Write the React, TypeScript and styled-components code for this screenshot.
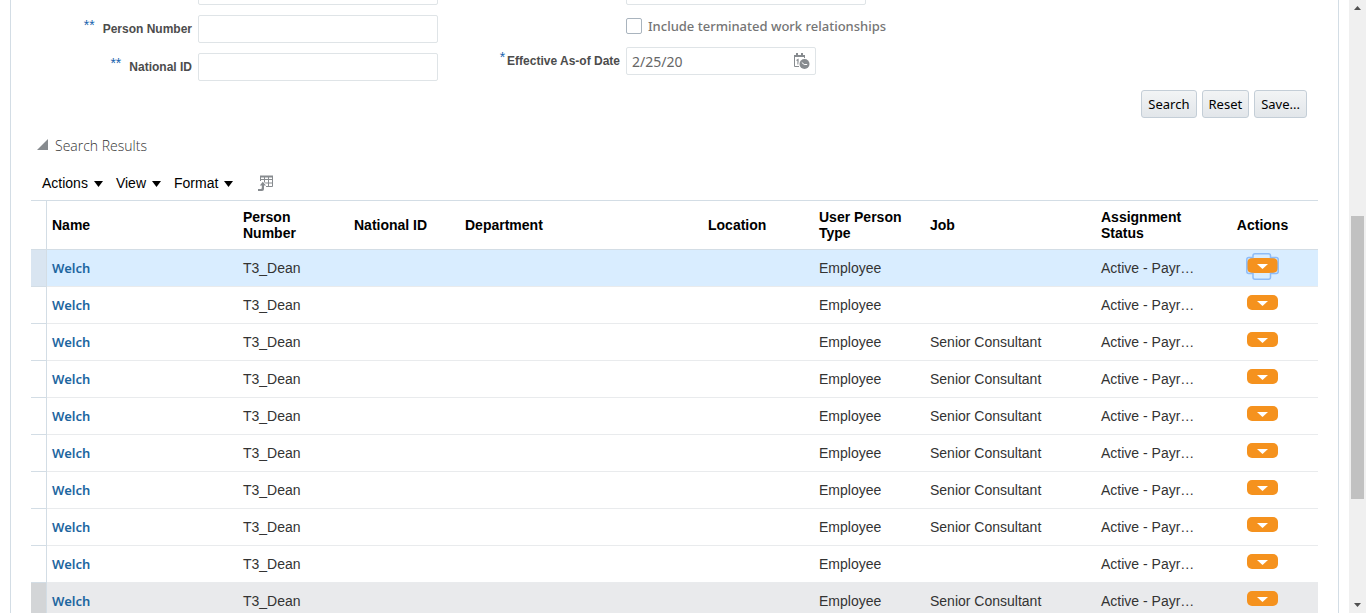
import React from "react";
import styled, { createGlobalStyle, css } from "styled-components";

const sans = `"Liberation Sans", Arial, sans-serif`;
const humanist = `"Noto Sans", "Open Sans", sans-serif`;

const GlobalStyle = createGlobalStyle`
  *, *::before, *::after { box-sizing: border-box; }
  body { margin: 0; background: #fff; font-family: ${sans}; font-size: 14px; color: #333; }
  button, input { font: inherit; color: inherit; margin: 0; }
`;

const Window = styled.div`
  display: flex;
  height: 100vh;
  overflow: hidden;
`;

const Panel = styled.main`
  flex: 1;
  min-width: 0;
  margin: 0 10px;
  border: solid #d3dde5;
  border-width: 0 1px;
  overflow: hidden;
`;

const SearchForm = styled.form`
  display: flex;
  flex-wrap: wrap;
  margin-top: -23px;
`;

const FieldColumn = styled.div<{ $gap: number }>`
  display: flex;
  flex-direction: column;
  gap: ${(p) => p.$gap}px;
`;

const Field = styled.div`
  display: flex;
`;

const FieldLabel = styled.label<{ $spaced?: boolean }>`
  display: flex;
  justify-content: flex-end;
  gap: ${(p) => (p.$spaced ? 8 : 2)}px;
  width: 188px;
  padding-right: 6px;
  font-size: 12px;
  font-weight: 700;
  line-height: 28px;
  color: #4c4c4c;
`;

const LeftColumn = styled(FieldColumn)`
  ${FieldLabel} {
    width: 187px;
  }
`;

const Required = styled.span`
  color: #1863ad;
  font-weight: 400;
  font-size: 14px;
  line-height: 20px;
`;

const boxStyle = css`
  height: 28px;
  border: 1px solid #dfe4e7;
  border-radius: 2px;
  background: #fff;
`;

const TextInput = styled.input`
  ${boxStyle}
  width: 240px;
  padding: 0 5px;
`;

const DateBox = styled.div`
  ${boxStyle}
  display: flex;
  align-items: center;
  width: 190px;
  padding: 0 5px;
  color: #666;
`;

const DateInput = styled.input`
  flex: 1;
  min-width: 0;
  border: 0;
  padding: 0;
  background: none;
  font-family: ${humanist};
  font-size: 14px;
`;

const IconButton = styled.button`
  display: flex;
  border: 0;
  padding: 0;
  background: none;
  color: #878b8f;
`;

const CheckLabel = styled.label`
  display: flex;
  align-items: center;
  gap: 6px;
  height: 16px;
  margin-left: 188px;
  font-family: ${humanist};
  font-size: 13px;
  font-weight: 500;
  color: #757575;
`;

const CheckBox = styled.input`
  appearance: none;
  width: 16px;
  height: 16px;
  border: 1px solid #a9b4be;
  border-radius: 2px;
  background: #fff;
`;

const ButtonBar = styled.div`
  flex-basis: 100%;
  display: flex;
  justify-content: flex-end;
  gap: 5px;
  padding: 9px 31px 0 0;
`;

const PushButton = styled.button`
  height: 28px;
  padding: 0 6px;
  border: 1px solid #c4ced7;
  border-radius: 3px;
  background: linear-gradient(#f2f4f5, #e2e6ea);
  font-family: ${humanist};
  font-size: 13px;
  color: #000;
`;

const Results = styled.section`
  padding: 17px 20px 0;
`;

const ResultsHeading = styled.h2`
  display: flex;
  align-items: center;
  gap: 7px;
  margin: 0;
  padding-left: 6px;
  height: 20px;
  font-family: "Open Sans", "Noto Sans", sans-serif;
  font-size: 14px;
  font-weight: 300;
  color: #333;
`;

const HeadingMark = styled.svg`
  margin-bottom: 2px;
`;

const Toolbar = styled.div`
  display: flex;
  align-items: center;
  gap: 13px;
  height: 20px;
  margin: 18px 0 7px;
  padding-left: 11px;
`;

const MenuButton = styled.button`
  display: flex;
  align-items: center;
  gap: 6px;
  border: 0;
  padding: 0;
  background: none;
  color: #000;

  svg {
    margin-top: 2px;
  }
`;

const DetachButton = styled(IconButton)`
  margin-left: 12px;
`;

const Table = styled.table`
  width: 100%;
  table-layout: fixed;
  border-collapse: separate;
  border-spacing: 0;
  border-top: 1px solid #d3dde5;
`;

const Column = styled.col<{ $width?: number }>`
  ${(p) => p.$width && `width: ${p.$width}px;`}
`;

const HeaderCell = styled.th<{ $center?: boolean }>`
  height: 49px;
  padding: 0 5px;
  border-bottom: 1px solid #d3dde5;
  text-align: ${(p) => (p.$center ? "center" : "left")};
  line-height: 16px;
  color: #000;
`;

const Gutter = styled.td`
  border-right: 1px solid #d3dde5;
  border-bottom: 1px solid #d3dde5;
`;

const Cell = styled.td`
  height: 37px;
  padding: 0 5px;
  border-bottom: 1px solid #e9ebed;
  overflow: hidden;
  text-overflow: ellipsis;
  white-space: nowrap;
`;

const ActionCell = styled.td`
  height: 37px;
  padding: 8px 0 0;
  border-bottom: 1px solid #e9ebed;
  vertical-align: top;
`;

type RowState = "selected" | "hover" | undefined;

const rowColors = {
  selected: { row: "#d9edff", gutter: "#d9e5f1" },
  hover: { row: "#e9eaec", gutter: "#d3d5d7" },
};

const Row = styled.tr<{ $state: RowState }>`
  ${(p) =>
    p.$state &&
    css`
      background: ${rowColors[p.$state].row};
      ${Gutter} {
        background: ${rowColors[p.$state].gutter};
      }
    `}
`;

const NameLink = styled.a`
  font-family: ${humanist};
  font-size: 13px;
  font-weight: 600;
  color: #1d669f;
  text-decoration: none;
`;

const RowMenu = styled.button`
  position: relative;
  display: flex;
  align-items: center;
  justify-content: center;
  width: 31px;
  height: 15px;
  margin: 0 auto;
  padding: 2px 0 0;
  border: 0;
  border-radius: 5px;
  background: #f5921e;
  color: #fff;
`;

const FocusRing = styled.svg`
  position: absolute;
  left: -1px;
  top: -5px;
`;

const Scrollbar = styled.div`
  display: flex;
  flex-direction: column;
  align-items: center;
  width: 17px;
  padding: 6px 0;
  background: #f0f0f0;
  color: #505050;
`;

const Thumb = styled.div`
  flex: 283;
  width: 13px;
  background: #c1c1c1;
`;

const Track = styled.div<{ $share: number }>`
  flex: ${(p) => p.$share};
`;

const Triangle = ({ width, height, up }: { width: number; height: number; up?: boolean }) => (
  <svg width={width} height={height} viewBox="0 0 10 6" preserveAspectRatio="none" aria-hidden="true">
    <path d={up ? "M0 6h10L5 0z" : "M0 0h10L5 6z"} fill="currentColor" />
  </svg>
);

const CalendarClock = () => (
  <svg width="17" height="17" viewBox="0 0 17 17" aria-hidden="true">
    <path d="M6 13.500H1.500V3h10v3" fill="none" stroke="currentColor" strokeWidth="1" />
    <path d="M1 2h11v2H1zM3 0h2v3H3zM8 0h2v3H8z" fill="currentColor" />
    <path d="M3.500 7.500 5 6.500v5" fill="none" stroke="currentColor" strokeWidth="1.200" />
    <circle cx="11.500" cy="11" r="6" fill="#fff" />
    <circle cx="11.500" cy="11" r="5" fill="currentColor" />
    <path d="M8.800 9.500l2.400 2h3" fill="none" stroke="#fff" strokeWidth="1" />
  </svg>
);

const DetachIcon = () => (
  <svg width="16" height="17" viewBox="0 0 16 17" aria-hidden="true">
    <path
      d="M2.500 6V1M6.500 1v10M10.500 1v10M14.500 1v10.500H8M2 4.500h13M6 8h9"
      fill="none"
      stroke="currentColor"
      strokeWidth="1"
    />
    <path d="M2 .5h13v2H2z" fill="currentColor" />
    <path d="M4.800 5.500 9.500 11H7v3.500q0 2.500-3 2.500H-1v-3.500H3V11H.5z" fill="#fff" />
    <path d="M4.800 6.800 8 10.500H6v3.500q0 2-2 2H0v-2h2.800q1 0 1-1v-2.500h-2z" fill="currentColor" />
  </svg>
);

const columns: { title: string; width?: number; center?: boolean }[] = [
  { title: "Name", width: 191 },
  { title: "Person Number", width: 111 },
  { title: "National ID", width: 111 },
  { title: "Department" },
  { title: "Location", width: 111 },
  { title: "User Person Type", width: 111 },
  { title: "Job", width: 171 },
  { title: "Assignment Status", width: 111 },
  { title: "Actions", width: 111, center: true },
];

const consultant = "Senior Consultant";
const rows: { job: string; state?: RowState }[] = [
  { job: "", state: "selected" },
  { job: "" },
  { job: consultant },
  { job: consultant },
  { job: consultant },
  { job: consultant },
  { job: consultant },
  { job: consultant },
  { job: "" },
  { job: consultant, state: "hover" },
];

export default function App() {
  return (
    <>
      <GlobalStyle />
      <Window>
        <Panel>
          <SearchForm onSubmit={(e) => e.preventDefault()}>
            <LeftColumn $gap={10}>
              <Field>
                <FieldLabel />
                <TextInput aria-label="Name" />
              </Field>
              <Field>
                <FieldLabel $spaced htmlFor="person-number">
                  <Required>**</Required>Person Number
                </FieldLabel>
                <TextInput id="person-number" />
              </Field>
              <Field>
                <FieldLabel $spaced htmlFor="national-id">
                  <Required>**</Required>National ID
                </FieldLabel>
                <TextInput id="national-id" />
              </Field>
            </LeftColumn>
            <FieldColumn $gap={13}>
              <Field>
                <FieldLabel />
                <TextInput aria-label="Keywords" />
              </Field>
              <CheckLabel>
                <CheckBox type="checkbox" />
                Include terminated work relationships
              </CheckLabel>
              <Field>
                <FieldLabel htmlFor="effective-date">
                  <Required>*</Required>Effective As-of Date
                </FieldLabel>
                <DateBox>
                  <DateInput id="effective-date" defaultValue="2/25/20" />
                  <IconButton type="button" aria-label="Select date">
                    <CalendarClock />
                  </IconButton>
                </DateBox>
              </Field>
            </FieldColumn>
            <ButtonBar>
              <PushButton type="submit">Search</PushButton>
              <PushButton type="reset">Reset</PushButton>
              <PushButton type="button">Save...</PushButton>
            </ButtonBar>
          </SearchForm>

          <Results>
            <ResultsHeading>
              <HeadingMark width="11" height="11" viewBox="0 0 11 11" aria-hidden="true">
                <path d="M11 0v11H0z" fill="#878b8f" />
              </HeadingMark>
              Search Results
            </ResultsHeading>
            <Toolbar>
              {["Actions", "View", "Format"].map((title) => (
                <MenuButton key={title} type="button">
                  {title}
                  <Triangle width={9} height={6} />
                </MenuButton>
              ))}
              <DetachButton type="button" aria-label="Detach">
                <DetachIcon />
              </DetachButton>
            </Toolbar>
            <Table>
              <colgroup>
                <Column $width={16} />
                {columns.map((c) => (
                  <Column key={c.title} $width={c.width} />
                ))}
              </colgroup>
              <thead>
                <tr>
                  <Gutter />
                  {columns.map((c) => (
                    <HeaderCell key={c.title} scope="col" $center={c.center}>
                      {c.title}
                    </HeaderCell>
                  ))}
                </tr>
              </thead>
              <tbody>
                {rows.map((row, i) => (
                  <Row key={i} $state={row.state}>
                    <Gutter />
                    <Cell>
                      <NameLink href="#">Welch</NameLink>
                    </Cell>
                    <Cell>T3_Dean</Cell>
                    <Cell />
                    <Cell />
                    <Cell />
                    <Cell>Employee</Cell>
                    <Cell>{row.job}</Cell>
                    <Cell>Active - Payr…</Cell>
                    <ActionCell>
                      <RowMenu type="button" aria-label="Row actions">
                        <Triangle width={11} height={5} />
                        {row.state === "selected" && (
                          <FocusRing width="33" height="27" viewBox="0 0 33 27" aria-hidden="true">
                            <path
                              d="M9 .8h13.500q2 0 2 2V4.500h5.700q2 0 2 2v12q0 2-2 2h-5.700v3.700q0 2-2 2H9q-2 0-2-2v-3.700H2.800q-2 0-2-2v-12q0-2 2-2H7V2.800q0-2 2-2z"
                              fill="none"
                              stroke="#8dbcf8"
                              strokeWidth="1.500"
                            />
                          </FocusRing>
                        )}
                      </RowMenu>
                    </ActionCell>
                  </Row>
                ))}
              </tbody>
            </Table>
          </Results>
        </Panel>
        <Scrollbar aria-hidden="true">
          <Triangle width={7} height={4} up />
          <Track $share={206} />
          <Thumb />
          <Track $share={104} />
          <Triangle width={7} height={4} />
        </Scrollbar>
      </Window>
    </>
  );
}
